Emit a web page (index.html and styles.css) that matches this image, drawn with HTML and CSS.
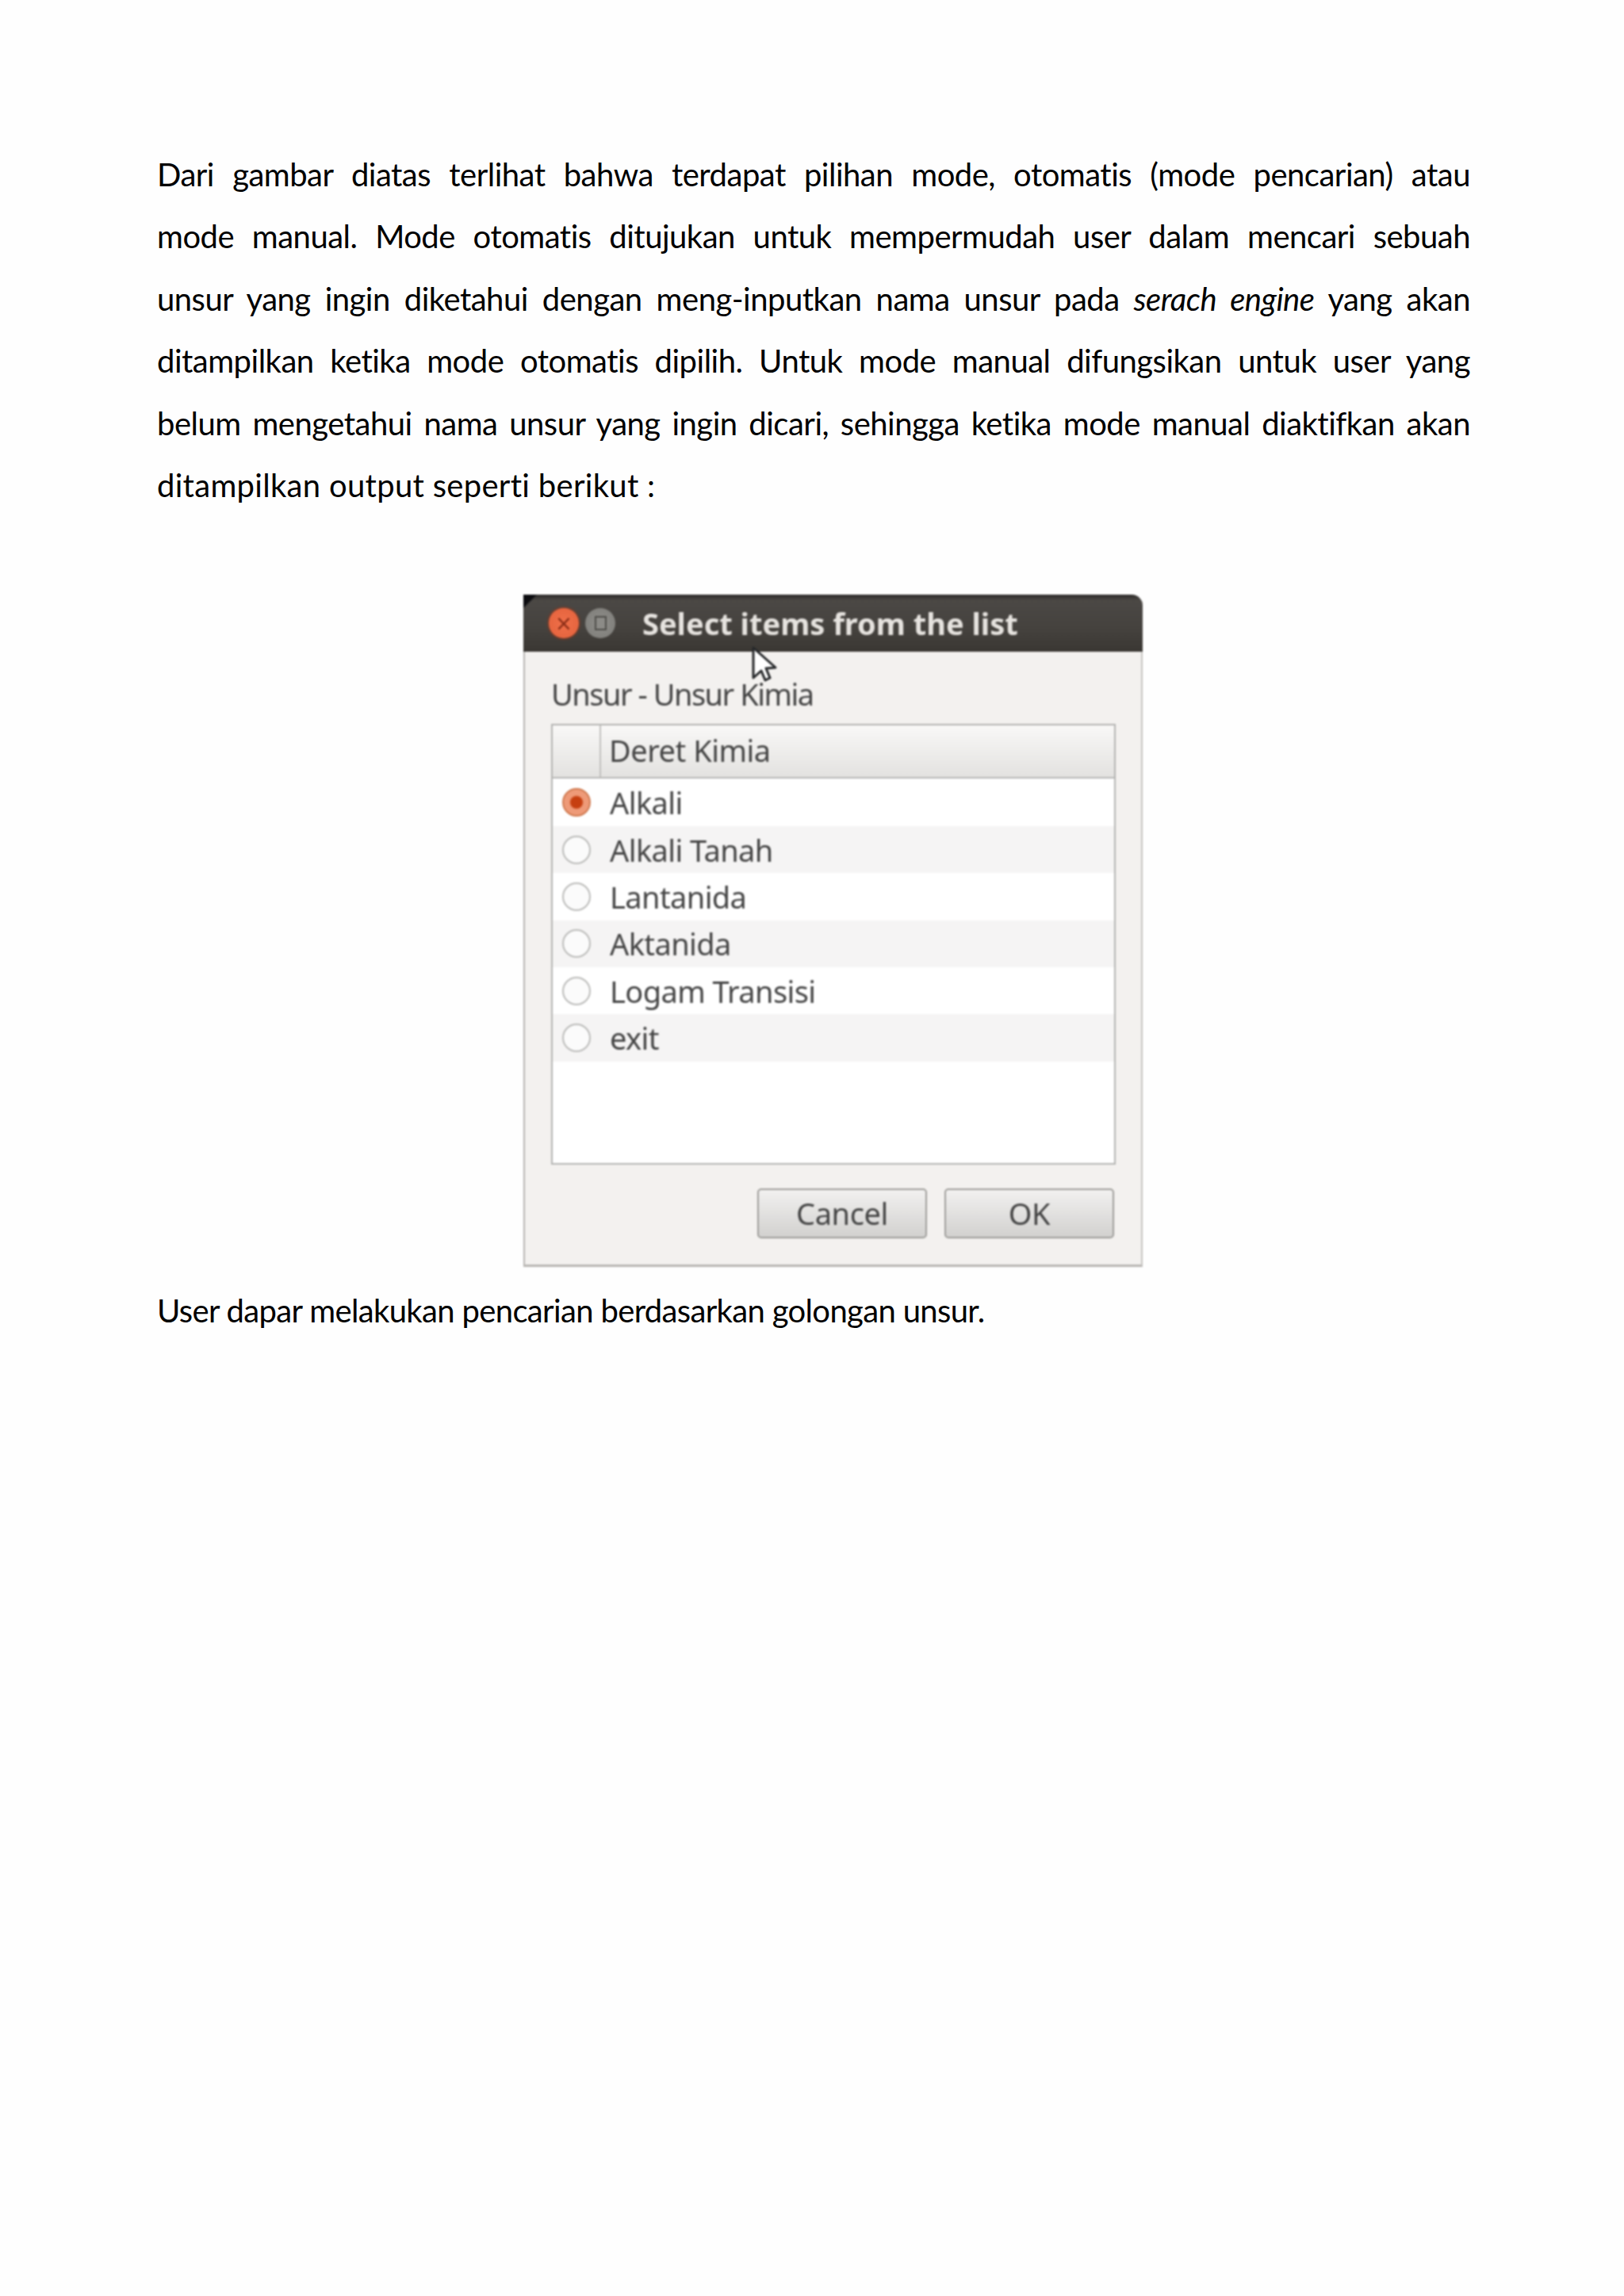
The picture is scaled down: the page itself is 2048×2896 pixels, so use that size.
FILE: index.html
```html
<!DOCTYPE html>
<html>
<head>
  <title>Select items from the list</title>
  <link rel="stylesheet" href="styles.css">
</head>
<body>
  <div class="page">
    <div class="text">
      <div class="line">Dari gambar diatas terlihat bahwa terdapat pilihan mode, otomatis (mode pencarian) atau</div>
      <div class="line">mode manual. Mode otomatis ditujukan untuk mempermudah user dalam mencari sebuah</div>
      <div class="line">unsur yang ingin diketahui dengan meng-inputkan nama unsur pada <em>serach engine</em> yang akan</div>
      <div class="line">ditampilkan ketika mode otomatis dipilih. Untuk mode manual difungsikan untuk user yang</div>
      <div class="line">belum mengetahui nama unsur yang ingin dicari, sehingga ketika mode manual diaktifkan akan</div>
      <div class="line last">ditampilkan output seperti berikut :</div>
    </div>

    <div class="dialog">
      <div class="titlebar">
        <div class="win-btn close"><span>×</span></div>
        <div class="win-btn max"><span></span></div>
        <div class="title">Select items from the list</div>
      </div>
      <div class="body">
        <div class="label">Unsur - Unsur Kimia</div>
        <div class="table">
          <div class="head">
            <div class="head-check"></div>
            <div class="head-name">Deret Kimia</div>
          </div>
          <div class="row"><i class="radio on"></i>Alkali</div>
          <div class="row alt"><i class="radio"></i>Alkali Tanah</div>
          <div class="row"><i class="radio"></i>Lantanida</div>
          <div class="row alt"><i class="radio"></i>Aktanida</div>
          <div class="row"><i class="radio"></i>Logam Transisi</div>
          <div class="row alt"><i class="radio"></i>exit</div>
        </div>
        <div class="buttons">
          <div class="btn">Cancel</div>
          <div class="btn">OK</div>
        </div>
      </div>
      <svg class="cursor" width="32" height="46" viewBox="0 0 32 46">
        <path d="M2 2 L2 40 L12 31 L17 43 L23 40 L18 28 L30 27 Z" fill="#fff" stroke="#26282a" stroke-width="3" stroke-linejoin="round"/>
      </svg>
    </div>

    <div class="line last caption">User dapar melakukan pencarian berdasarkan golongan unsur.</div>
  </div>
</body>
</html>
```

FILE: styles.css
```css
html, body {
  margin: 0;
  background-color: #fefefe;
}

.page {
  width: 2048px;
  height: 2896px;
  box-sizing: border-box;
  padding: 181px 194px 0 198px;
  font-family: "Lato", "Liberation Sans", sans-serif;
  color: #000;
}

.line {
  font-size: 40px;
  line-height: 78.4px;
  letter-spacing: -0.5px;
  font-variant-ligatures: none;
  text-align: justify;
  text-align-last: justify;
}
.line.last {
  letter-spacing: 0.3px;
  text-align-last: left;
}
.line.caption {
  margin-top: 16px;
  letter-spacing: -0.65px;
}

.dialog {
  position: relative;
  width: 781px;
  height: 848px;
  margin: 99px 0 0 462px;
  display: flex;
  flex-direction: column;
  box-sizing: border-box;
  background-color: #f3f1ef;
  border-left: 2px solid #b8b6b3;
  border-right: 2px solid #c6c4c1;
  border-bottom: 3px solid #b8b6b3;
  border-radius: 0 14px 0 0;
  font-family: "Noto Sans", "Liberation Sans", sans-serif;
  filter: blur(0.8px);
}

.titlebar {
  display: flex;
  align-items: center;
  height: 72px;
  margin: 0 -2px;
  padding-left: 32px;
  flex: none;
  background: linear-gradient(135deg, #0c0c10 0 11px, transparent 13px), linear-gradient(#2c2a28, #4b4845 10%, #45423e 60%, #3a3733);
  border-radius: 0 14px 0 0;
}
.win-btn {
  width: 38px;
  height: 38px;
  margin-right: 8px;
  border-radius: 50%;
  display: flex;
  align-items: center;
  justify-content: center;
}
.win-btn.close {
  background: radial-gradient(#f0704a, #e2603a);
  box-shadow: 0 0 3px 1px #8a3a22;
  color: #8e2f18;
  font-size: 34px;
  line-height: 38px;
}
.win-btn.max {
  background: radial-gradient(#8f8e8a, #7d7c78);
}
.win-btn.max span {
  width: 11px;
  height: 14px;
  border: 2px solid #4e4d49;
  background-color: #8c8b87;
}
.title {
  margin-left: 26px;
  font-size: 38px;
  font-weight: 700;
  color: #e6e3df;
  white-space: nowrap;
}

.body {
  flex: 1;
  display: flex;
  flex-direction: column;
  padding: 0 32px 0 33px;
}
.label {
  height: 91px;
  line-height: 106px;
  font-size: 38px;
  letter-spacing: -1.5px;
  color: #454545;
}
.table {
  height: 556px;
  box-sizing: border-box;
  background-color: #fff;
  border: 2px solid #b4b4b2;
  flex: none;
}
.head {
  display: flex;
  height: 67px;
  box-sizing: border-box;
  border-bottom: 2px solid #b8b8b6;
  background: linear-gradient(#f9f8f7, #e3e2e0);
  font-size: 38px;
  letter-spacing: -0.5px;
  color: #454545;
}
.head-check {
  width: 59px;
  border-right: 2px solid #c2c1bf;
}
.head-name {
  padding-left: 10px;
  line-height: 63px;
}
.row {
  display: flex;
  align-items: center;
  height: 59.4px;
  padding-left: 12px;
  font-size: 38px;
  letter-spacing: -0.6px;
  color: #454545;
}
.row.alt {
  background-color: #f5f4f4;
}
.radio {
  width: 32px;
  height: 32px;
  margin-right: 24px;
  border: 2px solid #bcbcba;
  border-radius: 50%;
  background-color: #fbfbfb;
  flex: none;
}
.radio.on {
  border-color: #d07a50;
  background: radial-gradient(circle, #c63f10 0 7px, #ee9a78 9px 15px);
}

.buttons {
  display: flex;
  justify-content: flex-end;
  gap: 22px;
  margin: 30px 2px 0 0;
}
.btn {
  width: 214px;
  height: 63px;
  box-sizing: border-box;
  border: 2px solid #9f9e9b;
  border-radius: 5px;
  background: linear-gradient(#f2f1f0, #d2d1cf);
  font-size: 38px;
  letter-spacing: -0.4px;
  line-height: 58px;
  text-align: center;
  color: #454545;
}

.cursor {
  position: absolute;
  left: 286px;
  top: 65px;
}
```
